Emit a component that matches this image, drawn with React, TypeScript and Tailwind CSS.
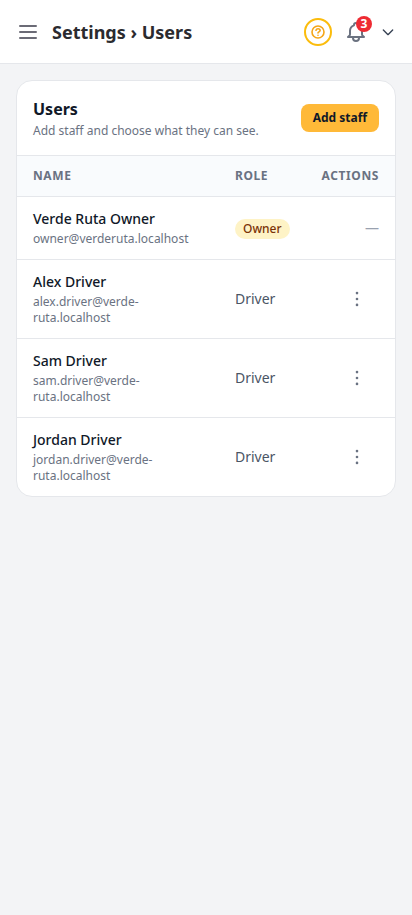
import React from 'react';

type Staff = { name: string; email: string };

const drivers: Staff[] = [
  { name: 'Alex Driver', email: 'alex.driver@verde-ruta.localhost' },
  { name: 'Sam Driver', email: 'sam.driver@verde-ruta.localhost' },
  { name: 'Jordan Driver', email: 'jordan.driver@verde-ruta.localhost' },
];

function Icon({ d, className }: { d: string; className: string }) {
  return (
    <svg className={className} viewBox="0 0 24 24" fill="none" stroke="currentColor" strokeWidth="2" strokeLinecap="round" strokeLinejoin="round">
      <path d={d} />
    </svg>
  );
}

function Header() {
  return (
    <header className="flex h-16 items-center border-b border-gray-200 bg-white px-4">
      <Icon className="h-6 w-6 text-[#6b6b76]" d="M4 6h16M4 12h16M4 18h16" />
      <h1 className="ml-3 flex-1 text-lg font-bold text-[#2b2b2f]">Settings › Users</h1>
      <button className="flex h-7 w-7 items-center justify-center rounded-full border-2 border-[#fbbc0c] text-[#f5a516]">
        <svg className="h-4 w-4" viewBox="0 0 24 24" fill="none" stroke="currentColor" strokeWidth="2.4" strokeLinecap="round" strokeLinejoin="round">
          <circle cx="12" cy="12" r="9" />
          <path d="M9 9.2C9.4 8 10.5 7.2 12 7.2c1.8 0 3.2 1.1 3.2 2.6 0 1.9-3.2 2-3.2 3.6M12 16.8h.01" />
        </svg>
      </button>
      <div className="relative ml-3 h-6 w-6 text-[#6b7280]">
        <Icon className="h-6 w-6" d="M15 17h5l-1.405-1.405A2.032 2.032 0 0118 14.158V11a6.002 6.002 0 00-4-5.659V5a2 2 0 10-4 0v.341C7.67 6.165 6 8.388 6 11v3.159c0 .538-.214 1.055-.595 1.436L4 17h5m6 0v1a3 3 0 11-6 0v-1m6 0H9" />
        <span className="absolute -top-1 left-3 flex h-4 w-4 items-center justify-center rounded-full bg-[#ee2b33] text-xs font-bold text-white">3</span>
      </div>
      <Icon className="ml-3 h-4 w-4 text-gray-700" d="M19 9l-7 7-7-7" />
    </header>
  );
}

export default function App() {
  return (
    <div className="min-h-screen bg-gray-100 font-['Noto_Sans',sans-serif]">
      <Header />
      <main className="p-4">
        <section className="overflow-hidden rounded-2xl border border-gray-200 bg-white">
          <div className="flex h-[74px] items-center justify-between px-4">
            <div>
              <h2 className="text-base leading-[25px] font-bold text-gray-900">Users</h2>
              <p className="text-xs leading-[18px] text-gray-500">Add staff and choose what they can see.</p>
            </div>
            <button className="h-7 rounded-lg bg-[#ffb938] px-3 text-xs font-bold text-gray-900">Add staff</button>
          </div>
          <table className="-mb-px w-full table-fixed border-collapse">
            <colgroup><col className="w-[202px]" /><col className="w-[86px]" /><col /></colgroup>
            <thead>
              <tr className="h-[41px] border-t border-gray-200 bg-[#f9fbfd] text-xs tracking-wider text-gray-500">
                <th className="px-4 text-left font-bold">NAME</th>
                <th className="px-4 text-left font-bold">ROLE</th>
                <th className="px-4 text-right font-bold">ACTIONS</th>
              </tr>
            </thead>
            <tbody>
              <tr className="h-[63px] border-t border-gray-200">
                <td className="px-4"><p className="text-sm font-medium text-gray-900">Verde Ruta Owner</p><p className="mt-0.5 text-xs leading-4 text-gray-500">owner@verderuta.localhost</p></td>
                <td className="px-4 pt-0.5"><span className="block h-5 w-fit rounded-full bg-amber-100 px-2 text-xs leading-5 font-medium text-[#7b3306]">Owner</span></td>
                <td className="px-4 text-right text-sm text-gray-400">—</td>
              </tr>
              {drivers.map((d) => (
                <tr key={d.name} className="h-[79px] border-t border-gray-200">
                  <td className="px-4"><p className="text-sm font-medium text-gray-900">{d.name}</p><p className="mt-0.5 w-[130px] text-xs leading-4 text-gray-500">{d.email}</p></td>
                  <td className="px-4 text-sm text-gray-600">Driver</td>
                  <td className="pr-7">
                    <svg className="ml-auto h-5 w-5 text-gray-500" viewBox="0 0 20 20" fill="currentColor"><circle cx="10" cy="4.1" r="1.3" /><circle cx="10" cy="10" r="1.3" /><circle cx="10" cy="15.9" r="1.3" /></svg>
                  </td>
                </tr>
              ))}
            </tbody>
          </table>
        </section>
      </main>
    </div>
  );
}
